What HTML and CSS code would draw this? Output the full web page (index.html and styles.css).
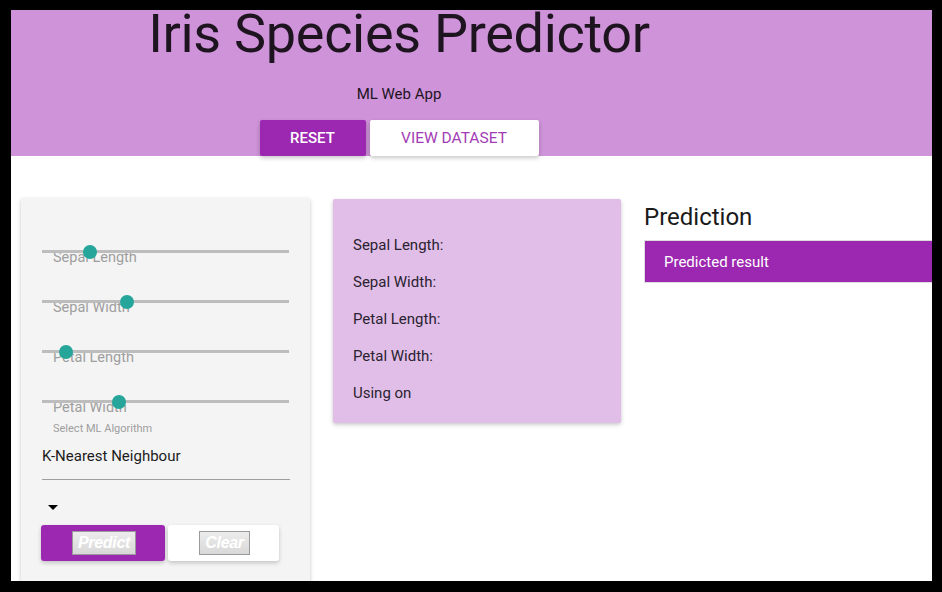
FILE: index.html
```html
<!DOCTYPE html>
<html>
<head>
<meta charset="utf-8">
<link rel="stylesheet" href="styles.css">
</head>
<body>
<div class="frame">
  <header class="hero">
    <div class="hero-inner">
      <h1 class="title">Iris Species Predictor</h1>
      <p class="subtitle">ML Web App</p>
      <div class="hero-actions">
        <button class="btn btn-primary">RESET</button>
        <button class="btn btn-light">VIEW DATASET</button>
      </div>
    </div>
  </header>
  <main class="content">
    <section class="card form-card">
      <div class="slider">
        <div class="track"><span class="thumb" style="left:41px"></span></div>
        <span class="slider-label">Sepal Length</span>
      </div>
      <div class="slider">
        <div class="track"><span class="thumb" style="left:78px"></span></div>
        <span class="slider-label">Sepal Width</span>
      </div>
      <div class="slider">
        <div class="track"><span class="thumb" style="left:17px"></span></div>
        <span class="slider-label">Petal Length</span>
      </div>
      <div class="slider slider-last">
        <div class="track"><span class="thumb" style="left:70px"></span></div>
        <span class="slider-label">Petal Width</span>
      </div>
      <div class="select-label">Select ML Algorithm</div>
      <div class="select-value">K-Nearest Neighbour</div>
      <div class="caret"></div>
      <div class="form-actions">
        <div class="btn-box btn-box-primary"><span class="native-btn">Predict</span></div>
        <div class="btn-box btn-box-light"><span class="native-btn">Clear</span></div>
      </div>
    </section>
    <section class="card summary-card">
      <div class="summary-line">Sepal Length:</div>
      <div class="summary-line">Sepal Width:</div>
      <div class="summary-line">Petal Length:</div>
      <div class="summary-line">Petal Width:</div>
      <div class="summary-line">Using on</div>
    </section>
    <section class="result">
      <h2 class="result-title">Prediction</h2>
      <div class="result-box">Predicted result</div>
    </section>
  </main>
</div>
</body>
</html>
```
FILE: styles.css
```css
html, body {
  margin: 0;
  padding: 0;
  background: #000;
}
body {
  width: 942px;
  height: 592px;
  overflow: hidden;
  font-family: Roboto, "Liberation Sans", sans-serif;
}
.frame {
  width: 921px;
  height: 571px;
  margin: 10px 0 0 11px;
  background: #fff;
}
.hero {
  height: 146px;
  background: #ce93d8;
}
.hero-inner {
  width: 776px;
  display: flex;
  flex-direction: column;
  align-items: center;
}
.title {
  margin: 0;
  font-size: 54px;
  line-height: 48px;
  font-weight: 400;
  color: #1d141f;
  letter-spacing: -0.3px;
}
.subtitle {
  margin: 28px 0 0;
  font-size: 15px;
  line-height: 16px;
  color: #1d141f;
}
.hero-actions {
  display: flex;
  gap: 4px;
  margin-top: 18px;
}
.btn {
  height: 36px;
  border: none;
  border-radius: 2px;
  font-family: Roboto, "Liberation Sans", sans-serif;
  font-size: 15px;
  box-shadow: 0 2px 4px rgba(0,0,0,0.22);
  padding: 0;
}
.btn-primary {
  width: 106px;
  background: #9c27b0;
  color: #fff;
  font-weight: 500;
}
.btn-light {
  width: 169px;
  background: #fff;
  color: #a23cb6;
  font-weight: 400;
  font-size: 15.5px;
}
.content {
  display: flex;
  align-items: flex-start;
  gap: 23px;
  padding: 42px 0 0 10px;
  height: 383px;
  overflow: hidden;
}
.card {
  border-radius: 2px;
  box-shadow: 0 2px 5px rgba(0,0,0,0.16), 0 1px 3px rgba(0,0,0,0.08);
}
.form-card {
  width: 289px;
  height: 420px;
  flex: none;
  box-sizing: border-box;
  background: #f4f4f4;
  padding: 52px 20px 0 21px;
}
.slider {
  position: relative;
  height: 50px;
}
.slider-last {
  height: 22px;
}
.track {
  position: relative;
  width: 247px;
  height: 3px;
  background: #bdbdbd;
}
.thumb {
  position: absolute;
  top: -5.5px;
  width: 14px;
  height: 14px;
  border-radius: 50%;
  background: #26a69a;
  z-index: 1;
}
.slider-label {
  display: block;
  margin: -3px 0 0 11px;
  font-size: 14.5px;
  line-height: 16px;
  color: #9e9e9e;
}
.select-label {
  padding-left: 11px;
  font-size: 11px;
  line-height: 13px;
  color: #9e9e9e;
}
.select-value {
  margin-top: 12px;
  font-size: 15px;
  line-height: 18px;
  color: #1c1c1c;
  padding-bottom: 14px;
  border-bottom: 1px solid #9e9e9e;
  width: 248px;
}
.caret {
  width: 0;
  height: 0;
  margin: 25px 0 0 6px;
  border-left: 5px solid transparent;
  border-right: 5px solid transparent;
  border-top: 5px solid #000;
}
.form-actions {
  display: flex;
  gap: 3px;
  margin: 15px 0 0 -1px;
}
.btn-box {
  height: 36px;
  border-radius: 3px;
  display: flex;
  align-items: center;
  justify-content: center;
  box-shadow: 0 2px 4px rgba(0,0,0,0.2);
}
.btn-box-primary {
  width: 124px;
  background: #9c27b0;
}
.btn-box-light {
  width: 111px;
  background: #fff;
}
.native-btn {
  display: flex;
  align-items: center;
  justify-content: center;
  height: 24px;
  box-sizing: border-box;
  border: 1px solid #9a9a9a;
  background: linear-gradient(#ececec, #d8d8d8);
  color: #fff;
  font-style: italic;
  font-weight: 700;
  font-size: 16px;
  font-family: "Liberation Sans", Arial, sans-serif;
  letter-spacing: -0.3px;
}
.btn-box-primary .native-btn {
  width: 64px;
  margin-left: 2px;
}
.btn-box-light .native-btn {
  width: 51px;
  margin-left: 2px;
}
.summary-card {
  width: 288px;
  height: 224px;
  flex: none;
  box-sizing: border-box;
  margin-top: 1px;
  background: #e1bee7;
  padding: 28px 20px 0;
}
.summary-line {
  font-size: 15px;
  line-height: 37px;
  color: #2a2230;
}
.result {
  flex: 1;
  padding-top: 5px;
}
.result-title {
  margin: 0;
  font-size: 24px;
  line-height: 28px;
  font-weight: 400;
  color: #1a1a1a;
}
.result-box {
  margin: 9px 0 0;
  height: 43px;
  box-sizing: border-box;
  border: 1px solid #ddd;
  border-right: none;
  background: #9c27b0;
  color: #fff;
  font-size: 15px;
  line-height: 42px;
  padding-left: 19px;
}
```
